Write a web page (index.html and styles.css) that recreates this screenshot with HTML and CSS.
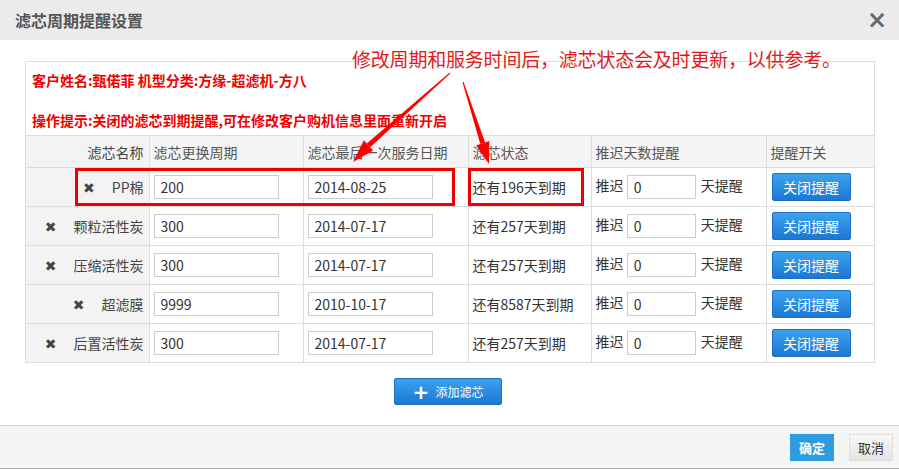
FILE: index.html
```html
<!DOCTYPE html>
<html lang="zh-CN">
<head>
    <meta charset="UTF-8">
    <title>滤芯周期提醒设置</title>
    <link rel="stylesheet" href="styles.css">
</head>
<body>
    <div class="dialog">
        <div class="dialog-header">
            <h3>滤芯周期提醒设置</h3>
            <span class="close">&times;</span>
        </div>

        <div class="dialog-body">
            <div class="box">
                <div class="info">
                    <p>客户姓名:甄偌菲 机型分类:方缘-超滤机-方八</p>
                    <p>操作提示:关闭的滤芯到期提醒,可在修改客户购机信息里面重新开启</p>
                </div>
                <table class="filter-table">
                    <colgroup>
                        <col style="width:123px">
                        <col style="width:154px">
                        <col style="width:165px">
                        <col style="width:123px">
                        <col style="width:175px">
                        <col>
                    </colgroup>
                    <thead>
                        <tr>
                            <th class="name">滤芯名称</th>
                            <th>滤芯更换周期</th>
                            <th>滤芯最后一次服务日期</th>
                            <th>滤芯状态</th>
                            <th>推迟天数提醒</th>
                            <th>提醒开关</th>
                        </tr>
                    </thead>
                    <tbody>
                        <tr>
                            <td class="name"><span class="del">&#x2716;</span>PP棉</td>
                            <td><input type="text" class="txt" value="200"></td>
                            <td><input type="text" class="txt" value="2014-08-25"></td>
                            <td>还有196天到期</td>
                            <td>推迟 <input type="text" class="txt short" value="0"> 天提醒</td>
                            <td><button class="btn-blue">关闭提醒</button></td>
                        </tr>
                        <tr>
                            <td class="name"><span class="del">&#x2716;</span>颗粒活性炭</td>
                            <td><input type="text" class="txt" value="300"></td>
                            <td><input type="text" class="txt" value="2014-07-17"></td>
                            <td>还有257天到期</td>
                            <td>推迟 <input type="text" class="txt short" value="0"> 天提醒</td>
                            <td><button class="btn-blue">关闭提醒</button></td>
                        </tr>
                        <tr>
                            <td class="name"><span class="del">&#x2716;</span>压缩活性炭</td>
                            <td><input type="text" class="txt" value="300"></td>
                            <td><input type="text" class="txt" value="2014-07-17"></td>
                            <td>还有257天到期</td>
                            <td>推迟 <input type="text" class="txt short" value="0"> 天提醒</td>
                            <td><button class="btn-blue">关闭提醒</button></td>
                        </tr>
                        <tr>
                            <td class="name"><span class="del">&#x2716;</span>超滤膜</td>
                            <td><input type="text" class="txt" value="9999"></td>
                            <td><input type="text" class="txt" value="2010-10-17"></td>
                            <td>还有8587天到期</td>
                            <td>推迟 <input type="text" class="txt short" value="0"> 天提醒</td>
                            <td><button class="btn-blue">关闭提醒</button></td>
                        </tr>
                        <tr>
                            <td class="name"><span class="del">&#x2716;</span>后置活性炭</td>
                            <td><input type="text" class="txt" value="300"></td>
                            <td><input type="text" class="txt" value="2014-07-17"></td>
                            <td>还有257天到期</td>
                            <td>推迟 <input type="text" class="txt short" value="0"> 天提醒</td>
                            <td><button class="btn-blue">关闭提醒</button></td>
                        </tr>
                    </tbody>
                </table>
            </div>

            <div class="add-row">
                <button class="btn-add"><span class="plus">+</span>添加滤芯</button>
            </div>
        </div>

        <div class="dialog-footer">
            <button class="btn-ok">确定</button>
            <button class="btn-cancel">取消</button>
        </div>

        <!-- 截图上的标注 -->
        <div class="note">修改周期和服务时间后，滤芯状态会及时更新，以供参考。</div>
        <div class="mark mark-a"></div>
        <div class="mark mark-b"></div>
        <svg class="arrows" width="899" height="469" viewBox="0 0 899 469">
            <polygon fill="#f00" points="449.7,72.6 450.3,73.4 370.2,147.3 366.8,143.5"/>
            <polygon fill="#f00" points="353,162 373.1,150.6 363.9,140.2"/>
            <polygon fill="#f00" points="462.5,82.2 463.5,81.8 485.1,142.5 480.3,144.1"/>
            <polygon fill="#f00" points="489,164 489.3,141 476.1,145.6"/>
        </svg>
    </div>
</body>
</html>
```

FILE: styles.css
```css
body {
    margin: 0;
    font-family: "Noto Sans CJK SC", "Liberation Sans", sans-serif;
    font-size: 14px;
    color: #333;
    background-color: #fff;
}
.dialog {
    position: relative;
    width: 899px;
    height: 469px;
    background-color: #fff;
    border-bottom: 1px solid #aaa;
    box-sizing: border-box;
}
.dialog-header {
    height: 40px;
    background-color: #ebebeb;
    display: flex;
    align-items: center;
    justify-content: space-between;
    padding: 0 12px 0 15px;
}
.dialog-header h3 {
    margin: 0;
    font-size: 16px;
    font-weight: bold;
    color: #555;
}
.close {
    font-size: 24px;
    font-weight: bold;
    color: #606a70;
    line-height: 20px;
    font-family: "DejaVu Sans", sans-serif;
}
.dialog-body {
    padding: 21px 24px 0 25px;
    height: 385px;
    box-sizing: border-box;
}
.box {
    border: 1px solid #ddd;
    border-bottom: none;
}
.info {
    padding: 8px 6px 5px;
}
.info p {
    margin: 0;
    line-height: 20px;
    color: #e00;
    font-weight: bold;
    font-size: 14px;
}
.info p + p {
    margin-top: 20px;
}
.filter-table {
    width: 100%;
    border-collapse: collapse;
    table-layout: fixed;
}
.filter-table th,
.filter-table td {
    border-top: 1px solid #ddd;
    border-bottom: 1px solid #ddd;
    text-align: left;
    padding: 0 5px 0 4px;
    white-space: nowrap;
}
.filter-table th + th,
.filter-table td + td {
    border-left: 1px solid #ddd;
}
.filter-table th {
    height: 31px;
    font-weight: normal;
    color: #555;
    background-color: #f5f5f5;
}
.filter-table td {
    height: 38px;
}
.filter-table .name {
    text-align: right;
    padding-right: 5px;
    background-color: #f3f3f3;
    color: #444;
}
.del {
    font-family: "DejaVu Sans", sans-serif;
    font-size: 14px;
    color: #444;
    margin-right: 17px;
}
.txt {
    width: 125px;
    height: 24px;
    box-sizing: border-box;
    border: 1px solid #ccc;
    padding: 0 6px;
    font-family: "Noto Sans CJK SC", "Liberation Sans", sans-serif;
    font-size: 14px;
    color: #333;
    vertical-align: middle;
}
.txt.short {
    width: 69px;
    margin: 0 2px 0 0;
}
.btn-blue {
    width: 79px;
    height: 28px;
    border: 1px solid #1f6fc0;
    border-radius: 2px;
    background: linear-gradient(#3ca2ee, #1b78d4);
    color: #fff;
    font-family: "Noto Sans CJK SC", sans-serif;
    font-size: 14px;
    padding: 0;
    margin-left: 1px;
}
.add-row {
    display: flex;
    justify-content: center;
    padding-top: 15px;
    padding-right: 4px;
}
.btn-add {
    width: 108px;
    height: 27px;
    border: 1px solid #1f6fc0;
    border-radius: 2px;
    background: linear-gradient(#3ca2ee, #1b78d4);
    color: #fff;
    font-family: "Noto Sans CJK SC", sans-serif;
    font-size: 12px;
    display: flex;
    align-items: center;
    justify-content: center;
    padding: 0;
}
.plus {
    font-family: "DejaVu Sans", sans-serif;
    font-size: 20px;
    font-weight: bold;
    line-height: 18px;
    margin-right: 6px;
}
.dialog-footer {
    border-top: 1px solid #d5d5d5;
    background-color: #f5f5f5;
    height: 42px;
    display: flex;
    align-items: center;
    justify-content: flex-end;
    padding-right: 6px;
    gap: 15px;
}
.btn-ok {
    width: 44px;
    height: 27px;
    border: none;
    background: #2b9de0;
    color: #fff;
    font-weight: bold;
    font-family: "Noto Sans CJK SC", sans-serif;
    font-size: 13px;
    padding: 0;
}
.btn-cancel {
    width: 44px;
    height: 27px;
    border: 1px solid #e0e0e0;
    background: linear-gradient(#f8f8f8, #e3e3e3);
    color: #333;
    font-family: "Noto Sans CJK SC", sans-serif;
    font-size: 13px;
    padding: 0;
}
.note {
    position: absolute;
    left: 352px;
    top: 47px;
    font-size: 19px;
    letter-spacing: -0.2px;
    line-height: 24px;
    color: #e01b1b;
    white-space: nowrap;
}
.mark {
    position: absolute;
    border: 3px solid #e00;
    box-sizing: border-box;
}
.mark-a {
    left: 75px;
    top: 168px;
    width: 380px;
    height: 38px;
}
.mark-b {
    left: 468px;
    top: 168px;
    width: 116px;
    height: 38px;
}
.arrows {
    position: absolute;
    left: 0;
    top: 0;
    pointer-events: none;
}
```
